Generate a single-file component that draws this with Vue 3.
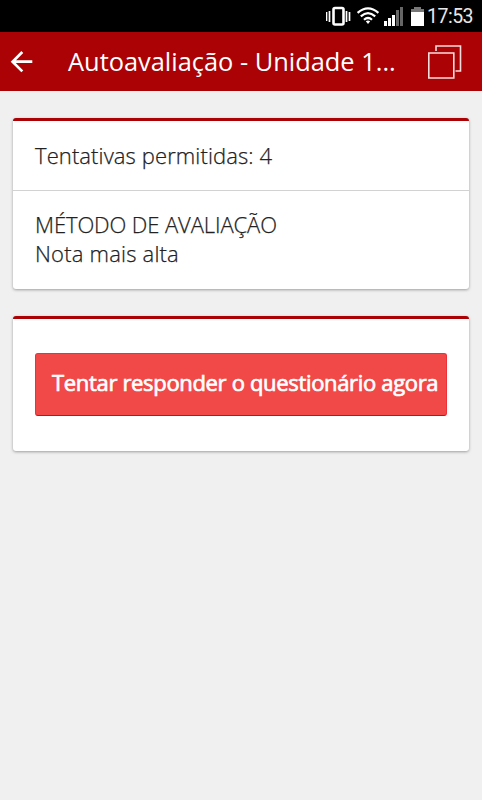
<template>
  <div class="screen">
    <div class="status-bar">
      <svg class="status-icons" width="101" height="32" viewBox="0 0 101 32">
        <rect x="7.5" y="8" width="10" height="16.5" rx="1.5" fill="none" stroke="#fff" stroke-width="2.6" />
        <path d="M1 12v9M4 11v11M21 11v11M24 12v9" transform="translate(-.5 0)" stroke="#fff" stroke-width="1.7" />
        <g fill="none" stroke="#fff" stroke-width="2.2">
          <path d="M31.6 12.8Q42 3.8 52.4 12.8" />
          <path d="M34.8 16.4Q42 10 49.2 16.4" />
          <path d="M38 19.8Q42 16.2 46 19.8" />
        </g>
        <path d="M39.8 21.3Q42 19.8 44.2 21.3L42 24z" fill="#fff" />
        <path d="M58 21h3v5h-3zM62 18h3v8h-3zM66 15h3v11h-3z" fill="#fff" />
        <path d="M70 10h3v16h-3zM74 7h3v19h-3z" fill="#666" />
        <path d="M88 7h7v2h3v4H85V9h3z" fill="#777" />
        <path d="M85 12h13v14H85z" fill="#fff" />
      </svg>
      <span class="clock">{{ time }}</span>
    </div>

    <header class="nav-bar">
      <button class="nav-btn back" aria-label="Voltar">
        <svg width="24" height="24" viewBox="0 0 24 24">
          <path d="M22.3 11.7H3M12.3 2L2.6 11.7l9.7 9.7" fill="none" stroke="#fff" stroke-width="2.7" />
        </svg>
      </button>
      <h1 class="title">{{ title }}</h1>
      <button class="nav-btn pages" aria-label="Abrir">
        <svg width="34" height="34" viewBox="0 0 34 34">
          <path d="M.8 8h25v25H.8zM8 6V1h24.500v25H27.500" fill="none" stroke="#f6dede" stroke-width="1.6" />
        </svg>
      </button>
    </header>

    <main class="content">
      <section class="card">
        <div class="item">Tentativas permitidas: {{ attempts }}</div>
        <div class="item method">
          <div class="label">MÉTODO DE AVALIAÇÃO</div>
          <div class="value">{{ method }}</div>
        </div>
      </section>

      <section class="card action">
        <button class="btn-attempt">Tentar responder o questionário agora</button>
      </section>
    </main>
  </div>
</template>

<script setup>
import { ref } from 'vue'

const time = ref('17:53')
const title = ref('Autoavaliação - Unidade 1...')
const attempts = ref(4)
const method = ref('Nota mais alta')
</script>

<style>
body {
  margin: 0;
  background: #f0f0f0;
}
</style>

<style scoped>
.screen {
  min-height: 800px;
  background: #f0f0f0;
  font-family: 'Open Sans', 'Noto Sans', sans-serif;
  color: #222;
}

.status-bar {
  display: flex;
  align-items: center;
  height: 32px;
  padding-left: 326px;
  background: #000;
}

.status-icons {
  flex: none;
}

.clock {
  padding-top: 2px;
  color: #e8e8e8;
  font-family: Roboto, sans-serif;
  font-size: 19.5px;
  letter-spacing: -0.5px;
  line-height: 30px;
}

.nav-bar {
  display: flex;
  align-items: center;
  box-sizing: border-box;
  height: 59px;
  padding: 0 20px 0 10px;
  background: #ab0205;
}

.nav-btn {
  display: flex;
  padding: 0;
  border: none;
  background: none;
}

.title {
  flex: 1;
  margin: 0 0 0 34px;
  color: #fff;
  font-size: 25.4px;
  font-weight: 400;
  line-height: 59px;
  white-space: nowrap;
}

.content {
  display: flex;
  flex-direction: column;
  gap: 27px;
  padding: 27px 13px 0;
}

.card {
  box-sizing: border-box;
  border-top: 3px solid #ab0205;
  border-radius: 3px;
  background: #fff;
  box-shadow: 0 1px 3px rgba(0, 0, 0, 0.35);
}

.item {
  padding: 20px 22px;
  font-size: 22px;
  font-weight: 300;
  letter-spacing: 0.1px;
  line-height: 29px;
  -webkit-text-stroke: 0.25px #222;
}

.item + .item {
  border-top: 1px solid #d2d2d2;
}

.item.method {
  padding: 19px 22px 21px;
}

.label {
  letter-spacing: -0.1px;
}

.value {
  letter-spacing: 0.2px;
}

.action {
  height: 135px;
  padding: 34px 22px;
}

.btn-attempt {
  display: block;
  box-sizing: border-box;
  width: 412px;
  height: 63px;
  padding: 0 0 5px 16px;
  border: 1px solid #ef3038;
  border-bottom-color: #e60012;
  border-radius: 3px;
  background: #f04948;
  color: #fff;
  font-family: inherit;
  font-size: 22px;
  font-weight: 400;
  letter-spacing: -0.33px;
  text-align: left;
  white-space: nowrap;
  -webkit-text-stroke: 0.7px #fff;
}
</style>
